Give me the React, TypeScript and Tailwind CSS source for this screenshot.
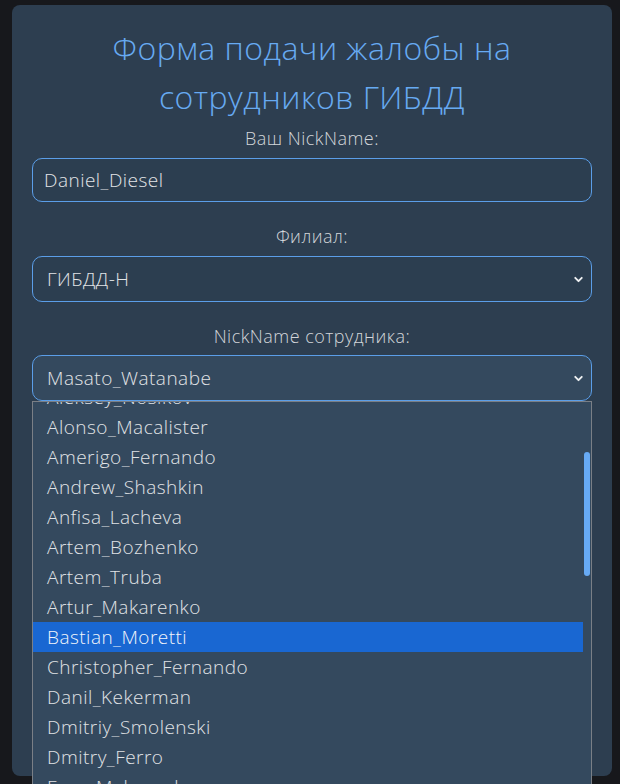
import { ChevronDown } from "lucide-react";

const officers = [
  "Aleksey_Nosikov",
  "Alonso_Macalister",
  "Amerigo_Fernando",
  "Andrew_Shashkin",
  "Anfisa_Lacheva",
  "Artem_Bozhenko",
  "Artem_Truba",
  "Artur_Makarenko",
  "Bastian_Moretti",
  "Christopher_Fernando",
  "Danil_Kekerman",
  "Dmitriy_Smolenski",
  "Dmitry_Ferro",
  "Egor_Makarenko",
];

function SelectBox({ value, active }: { value: string; active?: boolean }) {
  return (
    <div
      className={
        "flex h-[46px] items-center justify-between rounded-[10px] border border-[#5b9ee8] pl-[14px] pr-[6px] text-[19px] text-[#e2e4e7] " +
        (active ? "bg-[#34495e]" : "bg-[#2c3e50]")
      }
    >
      <span>{value}</span>
      <ChevronDown size={13} strokeWidth={3.5} className="text-[#eef0f2]" />
    </div>
  );
}

export default function App() {
  return (
    <div
      className="h-[784px] overflow-hidden bg-[#17181c] pt-[5px] pl-[12px]"
      style={{ fontFamily: '"Open Sans", "Noto Sans", sans-serif' }}
    >
      <div className="relative h-[771px] w-[600px] rounded-[8px] bg-[#2d3e50] px-5 pt-[18px] font-light tracking-[0.03em]">
        <h1 className="text-center text-[32px] leading-[49px] text-[#67aaf2]">
          Форма подачи жалобы на
          <br />
          сотрудников ГИБДД
        </h1>

        <div className="mt-[5px]">
          <label className="block text-center text-[18px] leading-6 text-[#d3d6da]">
            Ваш NickName:
          </label>
          <div className="mt-2 flex h-[44px] items-center rounded-[10px] border border-[#5b9ee8] bg-[#2c3e50] px-[11px] text-[19px] text-[#e2e4e7]">
            Daniel_Diesel
          </div>
        </div>

        <div className="mt-[22px]">
          <label className="block text-center text-[18px] leading-6 text-[#d3d6da]">
            Филиал:
          </label>
          <div className="mt-[8px]">
            <SelectBox value="ГИБДД-Н" />
          </div>
        </div>

        <div className="relative mt-[22px]">
          <label className="block text-center text-[18px] leading-6 text-[#d3d6da]">
            NickName сотрудника:
          </label>
          <div className="mt-[7px]">
            <SelectBox value="Masato_Watanabe" active />
          </div>

          <div className="absolute left-0 right-0 top-[100%] z-10 h-[400px] overflow-hidden border border-b-0 border-[#7a7f86] bg-[#34495e]">
            <div className="flex">
              <ul className="-mt-[20px] flex-1">
                {officers.map((name) => (
                  <li
                    key={name}
                    className={
                      "flex h-[30px] items-center pl-[14px] text-[19px] " +
                      (name === "Bastian_Moretti"
                        ? "bg-[#1967d2] text-[#f2f5fa]"
                        : "text-[#e0e3e6]")
                    }
                  >
                    {name}
                  </li>
                ))}
              </ul>
              <div className="w-[8px] pt-[50px]">
                <div className="ml-[1px] h-[124px] w-[6px] rounded-full bg-[#67aaf4]" />
              </div>
            </div>
          </div>
        </div>
      </div>
    </div>
  );
}
